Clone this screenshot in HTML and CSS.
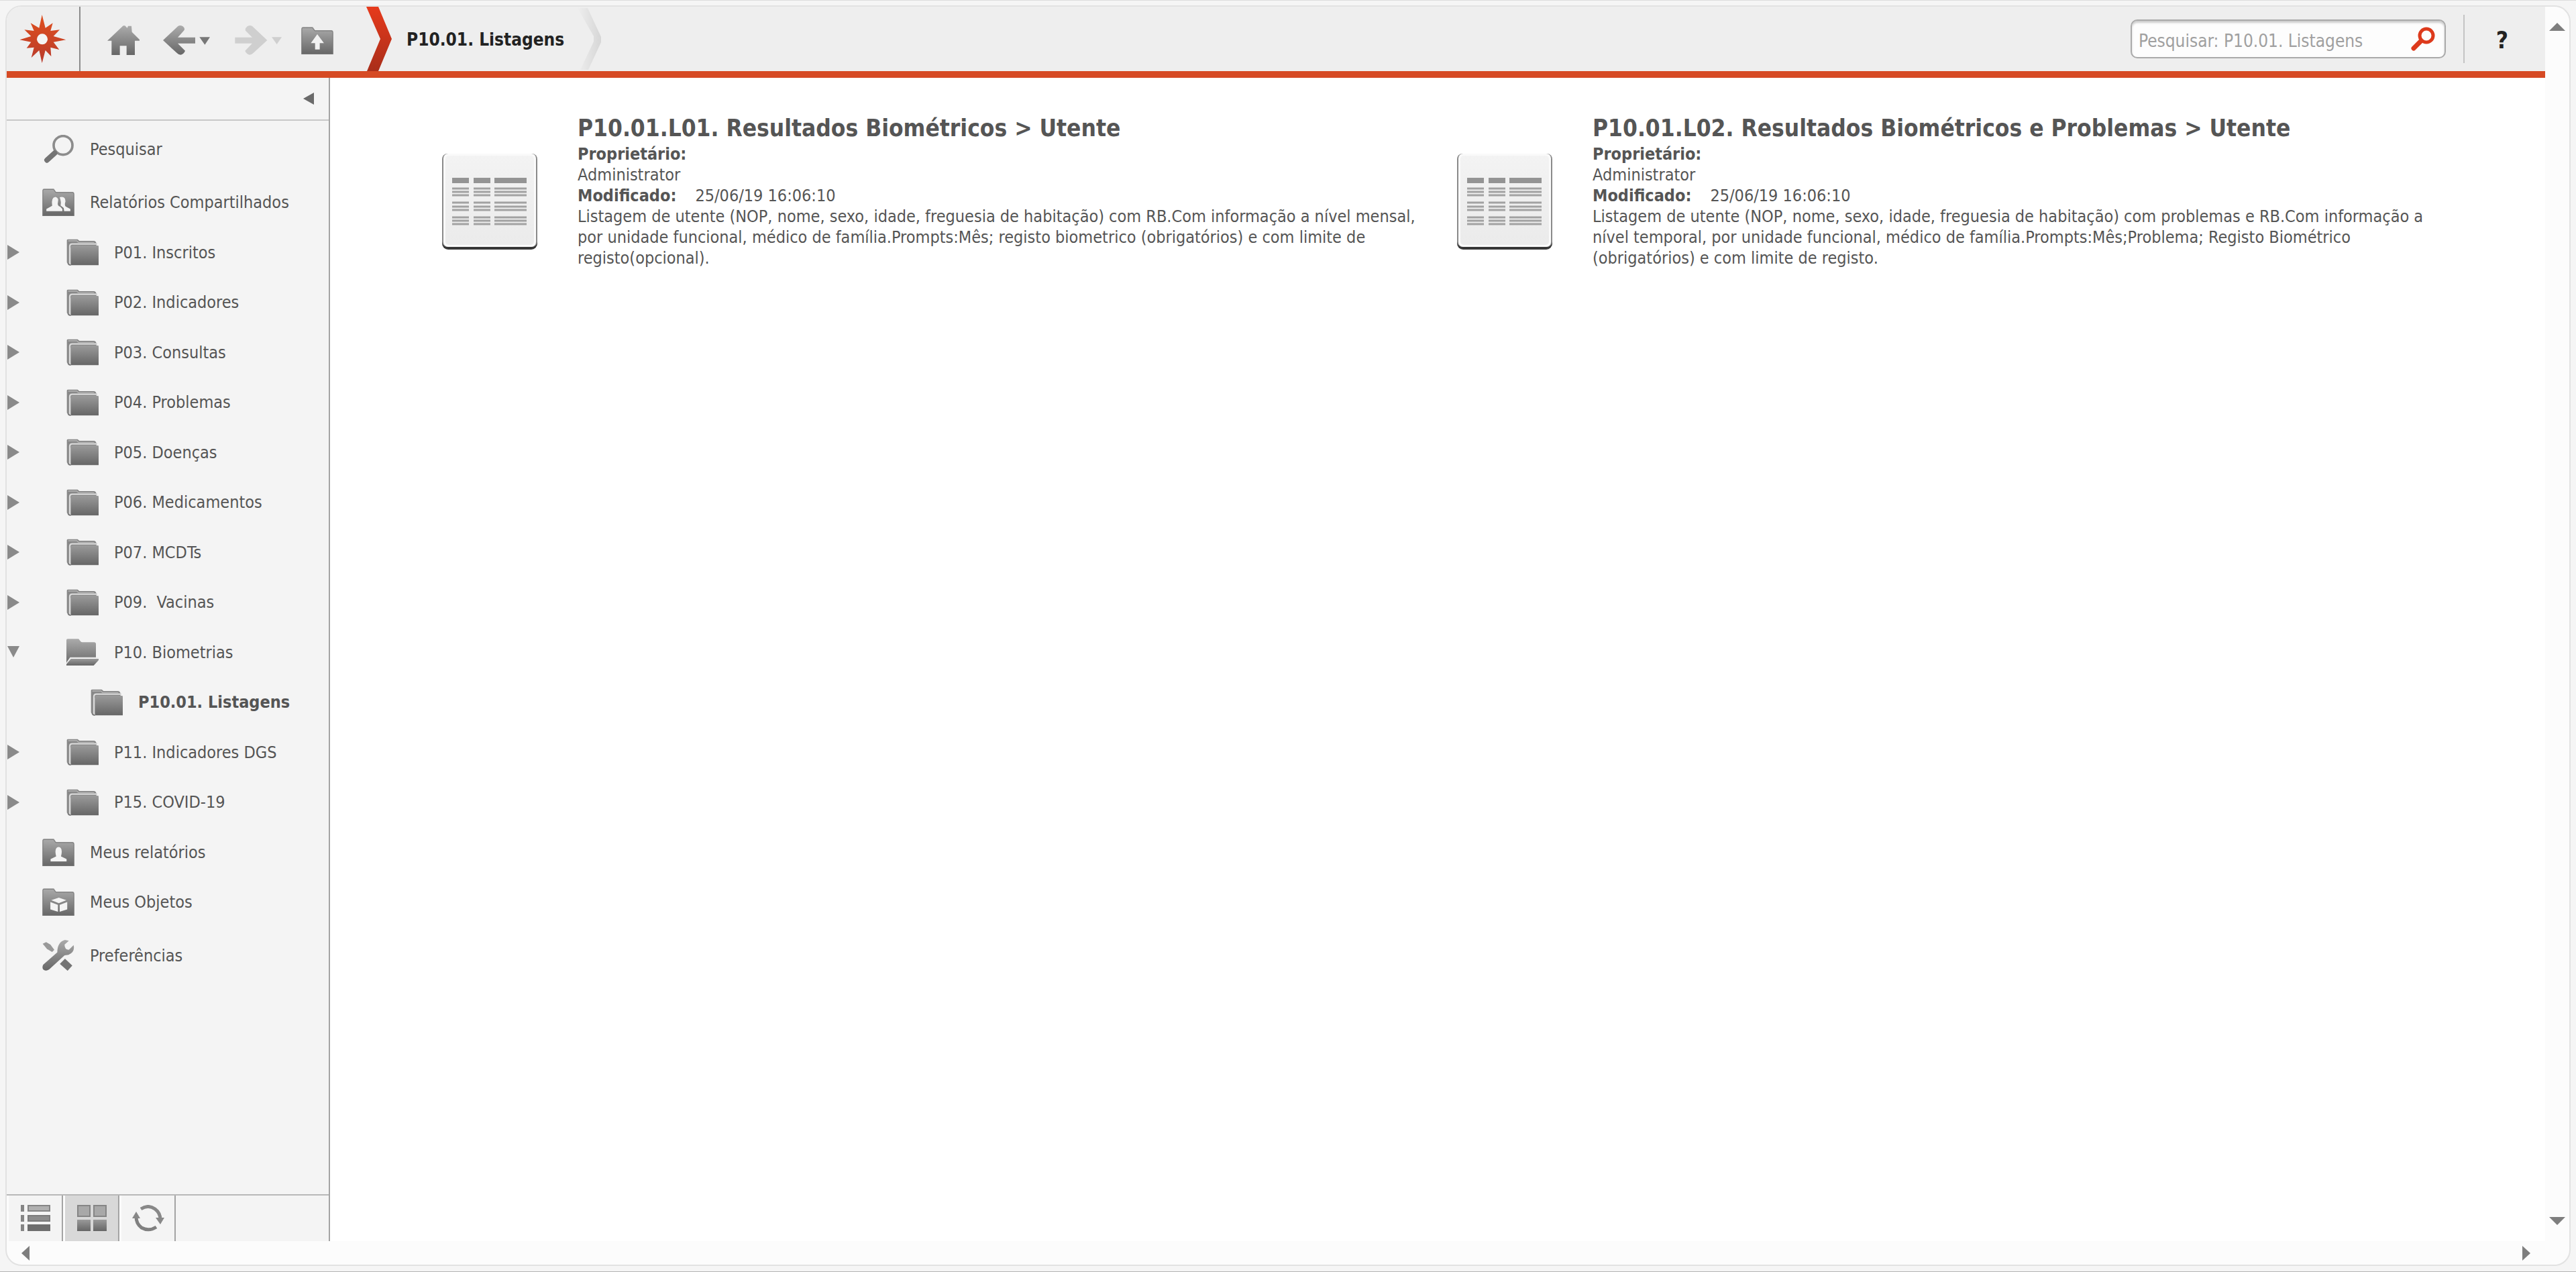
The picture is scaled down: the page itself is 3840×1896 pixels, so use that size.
FILE: index.html
```html
<!DOCTYPE html>
<html lang="pt">
<head>
<meta charset="utf-8">
<title>P10.01. Listagens</title>
<link rel="stylesheet" href="styles.css">
</head>
<body>
<svg class="sprite" aria-hidden="true">
  <defs>
    <linearGradient id="gray" x1="0" y1="0" x2="0" y2="1"><stop offset="0" stop-color="#ababab"/><stop offset="1" stop-color="#666"/></linearGradient>
    <linearGradient id="grayDark" x1="0" y1="0" x2="0" y2="1"><stop offset="0" stop-color="#9a9a9a"/><stop offset="1" stop-color="#666"/></linearGradient>
    <linearGradient id="flame" x1="0" y1="0" x2="0" y2="1"><stop offset="0" stop-color="#e0501e"/><stop offset="1" stop-color="#b83a2c"/></linearGradient>
    <linearGradient id="redBand" x1="0" y1="0" x2="0" y2="1"><stop offset="0" stop-color="#e63a1c"/><stop offset="1" stop-color="#a92e1a"/></linearGradient>
    <linearGradient id="sheet" x1="0" y1="0" x2="0" y2="1"><stop offset="0" stop-color="#f3f3f3"/><stop offset="1" stop-color="#ebebeb"/></linearGradient>
  </defs>
  <symbol id="folder" viewBox="0 0 144 120">
    <path d="M2 6Q2 2 8 2H50L58 9H122Q132 10 134 20V40H20V112H10Q2 112 2 102Z" fill="#888"/>
    <path d="M8 9H46L54 16H124" fill="none" stroke="#b4b4b4" stroke-width="4"/>
    <path d="M15 112V34Q15 23 26 23H138" fill="none" stroke="#d8d8d8" stroke-width="7"/>
    <path d="M20 118V36Q20 30 28 30H140Q144 30 144 34V118Z" fill="url(#grayDark)"/>
    <path d="M8 110Q10 117 20 117" fill="none" stroke="#777" stroke-width="6"/>
  </symbol>
  <symbol id="folder-open" viewBox="0 0 144 120">
    <path d="M0 120V6Q0 1 6 1H52Q56 1 58 5L64 13Q66 16 72 16H124Q132 16 132 24V84H18L0 108Z" fill="url(#gray)"/>
    <path d="M4 106L18 86H142" fill="none" stroke="#ececec" stroke-width="5"/>
    <path d="M0 120V114L20 90H144V96L122 120Z" fill="url(#grayDark)"/>
  </symbol>
  <symbol id="folder-flat" viewBox="0 0 144 124">
    <path d="M0 124V8Q0 1 7 1H52L62 15H136Q144 15 144 24V124Z" fill="url(#gray)"/>
    <path d="M2 122V9Q2 4 8 4H50L60 18H135Q142 18 142 26V122Z" fill="none" stroke="#777" stroke-width="3"/>
  </symbol>
  <symbol id="report" viewBox="0 0 144 144">
    <rect x="1" y="3" width="142" height="140" rx="9" fill="#363636"/>
    <rect x="1" y="0" width="142" height="139" rx="8" fill="#8a8a8a"/>
    <rect x="3" y="0" width="138" height="139" rx="7" fill="#fafafa"/>
    <rect x="6" y="3" width="132" height="133" rx="5" fill="url(#sheet)"/>
    <path d="M16 40H41M48 40H73M79 40H127" stroke="#949494" stroke-width="8"/>
    <path d="M16 52H41M48 52H73M79 52H127M16 57H41M48 57H73M79 57H127M16 62H41M48 62H73M79 62H127M16 73H41M48 73H73M79 73H127M16 79H41M48 79H73M79 79H127M16 84H41M48 84H73M79 84H127M16 95H41M48 95H73M79 95H127M16 100H41M48 100H73M79 100H127M16 105H41M48 105H73M79 105H127" stroke="#a2a2a2" stroke-width="3"/>
  </symbol>
</svg>

<div class="window">
  <div class="viewport">
    <header class="topbar">
      <a class="logo" href="#" aria-label="Início">
        <svg width="70" height="72" viewBox="91 66 208 216"><path d="M191 66L206 125L239 103L229 138L270 133L242 162L298 178L242 188L268 222L229 212L232 252L206 225L191 282L178 225L143 258L155 212L122 215L142 188L91 178L142 162L112 133L155 138L140 103L178 125Z" fill="url(#flame)"/><circle cx="192" cy="175" r="24" fill="#f4f4f4"/></svg>
      </a>
      <nav class="tools">
        <button class="tool home" aria-label="Página inicial"><svg width="48" height="44" viewBox="478 113 144 132"><path d="M478 181L549 114H557L567 124L571 115H586L588 142L622 176V181H601V245H564V204H534V245H497V181Z" fill="url(#gray)"/></svg></button>
        <button class="tool" aria-label="Voltar"><svg width="70" height="44" viewBox="729 114 210 132"><path d="M729 180L796 117Q806 111 818 118Q830 128 822 137L795 167H873V194H795L828 227Q822 242 808 245Q798 245 792 238Z" fill="url(#gray)"/><path d="M892 166H939L916 200Z" fill="#777"/></svg></button>
        <button class="tool" aria-label="Avançar" disabled><svg width="70" height="44" viewBox="1052 114 210 132"><path d="M1197 180L1130 117Q1120 111 1108 118Q1096 128 1100 137L1130 167H1053V194H1130L1098 227Q1104 242 1118 245Q1128 245 1134 238Z" fill="#cfcfcf"/><path d="M1217 166H1262L1240 198Z" fill="#cfcfcf"/></svg></button>
        <button class="tool" aria-label="Pasta superior"><svg width="48" height="41" viewBox="0 0 144 124"><use href="#folder-flat" width="144" height="124"/><path d="M72 33L102 73H83V102H62V73H43Z" fill="#f2f2f2"/></svg></button>
      </nav>
      <div class="crumbs">
        <svg width="38" height="96" viewBox="0 0 38 96"><path d="M0 0H18L38 48L18 96H1L21 48Z" fill="url(#redBand)"/></svg>
        <span class="crumb">P10.01. Listagens</span>
        <svg width="38" height="92" viewBox="0 0 38 92"><defs><linearGradient id="pale"><stop offset="0" stop-color="#eee"/><stop offset="1" stop-color="#d6d6d6"/></linearGradient></defs><path d="M2 0H17L37 43V51L18 92H6L26 50V42Z" fill="url(#pale)"/></svg>
      </div>
      <form class="search">
        <input type="text" aria-label="Pesquisar" placeholder="Pesquisar: P10.01. Listagens">
        <button type="button" aria-label="Executar pesquisa"><svg width="36" height="36" viewBox="0 0 36 36"><circle cx="23" cy="13" r="10" fill="none" stroke="#dd3a1c" stroke-width="5"/><path d="M14 22L4 32" stroke="#dd3a1c" stroke-width="7" stroke-linecap="round"/></svg></button>
      </form>
      <button class="help" aria-label="Ajuda">?</button>
    </header>

    <div class="main">
      <aside class="sidebar">
        <div class="side-head"><button class="plain" aria-label="Recolher painel"><svg width="16" height="18" viewBox="0 0 16 18"><path d="M16 0V18L0 9Z" fill="#6a6a6a"/></svg></button></div>
        <ul class="tree">
          <li class="tall"><a href="#"><svg class="icon" width="48" height="42" viewBox="187 65 144 126"><circle cx="280" cy="112" r="42" fill="none" stroke="#8c8c8c" stroke-width="11"/><path d="M242 147L208 178" stroke="#747474" stroke-width="24" stroke-linecap="round"/></svg>Pesquisar</a></li>
          <li><a href="#"><svg class="icon" width="48" height="41" viewBox="0 0 144 124"><use href="#folder-flat" width="144" height="124"/><path d="M18 102V92L44 78Q38 42 58 38Q76 42 70 62Q66 78 80 82L90 92V102ZM78 39Q104 32 104 58Q98 76 106 82L126 92V102H98L96 88L82 76Q86 60 78 39Z" fill="#f4f4f4"/></svg>Relatórios Compartilhados</a></li>
          <li class="node"><button class="plain" aria-label="Expandir"><svg width="18" height="22"><path d="M0 0L18 11L0 22Z" fill="#8a8a8a"/></svg></button><a href="#"><svg class="icon" width="48" height="40"><use href="#folder"/></svg>P01. Inscritos</a></li>
          <li class="node"><button class="plain" aria-label="Expandir"><svg width="18" height="22"><path d="M0 0L18 11L0 22Z" fill="#8a8a8a"/></svg></button><a href="#"><svg class="icon" width="48" height="40"><use href="#folder"/></svg>P02. Indicadores</a></li>
          <li class="node"><button class="plain" aria-label="Expandir"><svg width="18" height="22"><path d="M0 0L18 11L0 22Z" fill="#8a8a8a"/></svg></button><a href="#"><svg class="icon" width="48" height="40"><use href="#folder"/></svg>P03. Consultas</a></li>
          <li class="node"><button class="plain" aria-label="Expandir"><svg width="18" height="22"><path d="M0 0L18 11L0 22Z" fill="#8a8a8a"/></svg></button><a href="#"><svg class="icon" width="48" height="40"><use href="#folder"/></svg>P04. Problemas</a></li>
          <li class="node"><button class="plain" aria-label="Expandir"><svg width="18" height="22"><path d="M0 0L18 11L0 22Z" fill="#8a8a8a"/></svg></button><a href="#"><svg class="icon" width="48" height="40"><use href="#folder"/></svg>P05. Doenças</a></li>
          <li class="node"><button class="plain" aria-label="Expandir"><svg width="18" height="22"><path d="M0 0L18 11L0 22Z" fill="#8a8a8a"/></svg></button><a href="#"><svg class="icon" width="48" height="40"><use href="#folder"/></svg>P06. Medicamentos</a></li>
          <li class="node"><button class="plain" aria-label="Expandir"><svg width="18" height="22"><path d="M0 0L18 11L0 22Z" fill="#8a8a8a"/></svg></button><a href="#"><svg class="icon" width="48" height="40"><use href="#folder"/></svg>P07. MCDTs</a></li>
          <li class="node"><button class="plain" aria-label="Expandir"><svg width="18" height="22"><path d="M0 0L18 11L0 22Z" fill="#8a8a8a"/></svg></button><a href="#"><svg class="icon" width="48" height="40"><use href="#folder"/></svg>P09.&nbsp; Vacinas</a></li>
          <li class="node"><button class="plain" aria-label="Recolher"><svg width="18" height="18"><path d="M0 0H18L9 17Z" fill="#8a8a8a"/></svg></button><a href="#"><svg class="icon" width="48" height="40"><use href="#folder-open"/></svg>P10. Biometrias</a></li>
          <li class="leaf"><a href="#" aria-current="page"><svg class="icon" width="48" height="40"><use href="#folder"/></svg>P10.01. Listagens</a></li>
          <li class="node"><button class="plain" aria-label="Expandir"><svg width="18" height="22"><path d="M0 0L18 11L0 22Z" fill="#8a8a8a"/></svg></button><a href="#"><svg class="icon" width="48" height="40"><use href="#folder"/></svg>P11. Indicadores DGS</a></li>
          <li class="node"><button class="plain" aria-label="Expandir"><svg width="18" height="22"><path d="M0 0L18 11L0 22Z" fill="#8a8a8a"/></svg></button><a href="#"><svg class="icon" width="48" height="40"><use href="#folder"/></svg>P15. COVID-19</a></li>
          <li><a href="#"><svg class="icon" width="48" height="41" viewBox="0 0 144 124"><use href="#folder-flat" width="144" height="124"/><path d="M37 103V92L62 80Q52 40 73 38Q94 40 84 80L109 92V103Z" fill="#f4f4f4"/></svg>Meus relatórios</a></li>
          <li><a href="#"><svg class="icon" width="48" height="41" viewBox="0 0 144 124"><use href="#folder-flat" width="144" height="124"/><path d="M40 54L74 42L108 54L74 67ZM36 62L70 75V106L36 95ZM78 75L112 62V95L78 106Z" fill="#f4f4f4"/></svg>Meus Objetos</a></li>
          <li class="tall"><a href="#"><svg class="icon" width="48" height="46" viewBox="0 0 150 144"><path d="M2 18L18 10L38 22L56 46L46 56L22 42Z" fill="#999"/><path d="M106 88L140 120L118 144L82 112Z" fill="#747474"/><path d="M4 116L70 58Q70 10 106 0L124 4L104 22Q104 46 124 46L146 24Q154 56 122 70L104 72L32 138Q16 148 4 138Q-2 128 4 116Z" fill="url(#gray)"/></svg>Preferências</a></li>
        </ul>
        <div class="views">
          <button aria-label="Lista"><svg width="44" height="40" viewBox="0 0 44 40"><path d="M0 0H5V10H0ZM0 15H5V25H0ZM0 29H5V39H0Z" fill="#858585"/><path d="M11 1H43V9H11Z" fill="#b0b0b0" stroke="#858585" stroke-width="2"/><path d="M11 16H43V24H11Z" fill="#8c8c8c" stroke="#7c7c7c" stroke-width="2"/><path d="M10 29H44V39H10Z" fill="#6e6e6e"/></svg></button>
          <button class="on" aria-label="Ícones"><svg width="44" height="40" viewBox="0 0 44 40"><path d="M1 1H19V17H1ZM25 1H43V17H25Z" fill="#a8a8a8" stroke="#858585" stroke-width="2"/><path d="M0 22H20V39H0ZM24 22H44V39H24Z" fill="url(#grayDark)"/></svg></button>
          <button aria-label="Atualizar"><svg width="48" height="40" viewBox="0 0 48 40"><path d="M13 6Q24 -1 34 6Q42 12 42 22" fill="none" stroke="#888" stroke-width="5"/><path d="M35 19H48L42 29Z" fill="#888"/><path d="M36 33Q25 40 14 34Q6 28 6 18" fill="none" stroke="#808080" stroke-width="5"/><path d="M0 20H12L6 10Z" fill="#888"/></svg></button>
        </div>
      </aside>

      <main class="cards">
        <article class="card">
          <svg width="144" height="144"><use href="#report"/></svg>
          <div class="info">
            <h2><a href="#">P10.01.L01. Resultados Biométricos &gt; Utente</a></h2>
            <dl><dt>Proprietário:</dt><dd>Administrator</dd></dl>
            <dl class="inline"><dt>Modificado:</dt><dd>25/06/19 16:06:10</dd></dl>
            <p>Listagem de utente (NOP, nome, sexo, idade, freguesia de habitação) com RB.Com informação a nível mensal, por unidade funcional, médico de família.Prompts:Mês; registo biometrico (obrigatórios) e com limite de registo(opcional).</p>
          </div>
        </article>
        <article class="card">
          <svg width="144" height="144"><use href="#report"/></svg>
          <div class="info">
            <h2><a href="#">P10.01.L02. Resultados Biométricos e Problemas &gt; Utente</a></h2>
            <dl><dt>Proprietário:</dt><dd>Administrator</dd></dl>
            <dl class="inline"><dt>Modificado:</dt><dd>25/06/19 16:06:10</dd></dl>
            <p>Listagem de utente (NOP, nome, sexo, idade, freguesia de habitação) com problemas e RB.Com informação a nível temporal, por unidade funcional, médico de família.Prompts:Mês;Problema; Registo Biométrico (obrigatórios) e com limite de registo.</p>
          </div>
        </article>
      </main>
    </div>
  </div>
  <div class="scroll vertical">
    <button class="plain" aria-label="Rolar para cima"><svg width="24" height="12"><path d="M0 12L12 0L24 12Z" fill="#7e7e7e"/></svg></button>
    <button class="plain" aria-label="Rolar para baixo"><svg width="24" height="12"><path d="M0 0H24L12 12Z" fill="#7e7e7e"/></svg></button>
  </div>
  <div class="scroll horizontal">
    <button class="plain" aria-label="Rolar para a esquerda"><svg width="12" height="22"><path d="M12 0V22L0 11Z" fill="#7e7e7e"/></svg></button>
    <button class="plain" aria-label="Rolar para a direita"><svg width="12" height="22"><path d="M0 0V22L12 11Z" fill="#7e7e7e"/></svg></button>
  </div>
</div>
</body>
</html>
```
FILE: styles.css
```css
* {
  box-sizing: border-box;
}

body {
  margin: 0;
  min-height: 100vh;
  display: flex;
  padding: 7px 8px 8px;
  background: #f5f5f5;
  border-top: 1px solid #dcdcdc;
  border-bottom: 1px solid #b4b4b4;
  color: #555;
  font-family: Tahoma, "DejaVu Sans Condensed", "DejaVu Sans", sans-serif;
  font-size: 25px;
  line-height: 31px;
}

.sprite {
  position: absolute;
  width: 0;
  height: 0;
}

svg {
  display: block;
  flex: none;
}

a {
  color: inherit;
  text-decoration: none;
}

button {
  border: 0;
  padding: 0;
  background: none;
  color: inherit;
  font: inherit;
}

.window {
  flex: 1;
  min-width: 0;
  display: grid;
  grid-template-columns: minmax(0, 1fr) 36px;
  grid-template-rows: 1fr 35px;
  overflow: hidden;
  background: #fcfcfc;
  border: 2px solid #e2e2e2;
  border-radius: 24px;
}

.viewport {
  display: flex;
  flex-direction: column;
}

/* Top bar */

.topbar {
  display: flex;
  align-items: center;
  height: 106px;
  flex: none;
  background: #eee;
  border-bottom: 10px solid #d64a24;
  font-size: 26px;
}

.logo {
  display: flex;
  align-items: center;
  justify-content: center;
  align-self: stretch;
  width: 110px;
  border-right: 2px solid #8c8c8c;
}

.tools {
  display: flex;
  align-items: center;
  gap: 35px;
  padding: 4px 0 0 40px;
}

.tool:nth-child(3) {
  margin-left: 2px;
}

.tool:nth-child(4) {
  margin-left: -6px;
}

.crumbs {
  display: flex;
  align-items: center;
  margin-left: 49px;
}

.crumb {
  padding: 2px 18px 0 22px;
  color: #222;
  font-weight: bold;
}

.search {
  display: flex;
  align-items: center;
  width: 470px;
  height: 58px;
  margin-left: auto;
  padding: 0 14px 0 10px;
  background: #fdfdfd;
  border: 2px solid #aaa;
  border-radius: 10px;
  box-shadow: inset 0 3px 3px #ccc;
}

.search input {
  flex: 1;
  min-width: 0;
  padding: 6px 0 0;
  border: 0;
  outline: 0;
  background: none;
  color: inherit;
  font: inherit;
}

.search input::placeholder {
  color: #a0a0a0;
  opacity: 1;
}

.help {
  width: 122px;
  height: 72px;
  margin-left: 26px;
  padding-top: 4px;
  border-left: 2px solid #c4c4c4;
  color: #222;
  font-size: 35px;
  font-weight: bold;
  text-indent: -8px;
}

/* Sidebar */

.main {
  flex: 1;
  display: flex;
}

.sidebar {
  flex: none;
  display: flex;
  flex-direction: column;
  width: 482px;
  background: #f4f4f4;
  border-right: 2px solid #a4a4a4;
}

.side-head {
  display: flex;
  align-items: center;
  justify-content: flex-end;
  height: 64px;
  padding-right: 22px;
  border-bottom: 2px solid #c8c8c8;
}

.tree {
  flex: 1;
  margin: 0;
  padding: 0;
  list-style: none;
}

.tree li {
  display: flex;
  align-items: center;
  height: 74px;
  padding-left: 53px;
}

.tree li:nth-child(even) {
  height: 75px;
}

.tree .tall,
.tree .tall:nth-child(odd) {
  height: 84px;
}

.tree .node {
  padding-left: 1px;
}

.tree .node a {
  margin-left: 70px;
}

.tree .leaf {
  padding-left: 125px;
}

.tree a {
  display: flex;
  align-items: center;
  gap: 23px;
}

.tree [aria-current] {
  font-weight: bold;
}

.views {
  display: flex;
  height: 70px;
  border-top: 2px solid #b8b8b8;
}

.views button {
  display: flex;
  align-items: center;
  justify-content: center;
  width: 84px;
  border-left: 3px solid #fcfcfc;
  border-right: 2px solid #a4a4a4;
}

.views .on {
  background: #d8d8d8;
}

/* Report cards */

.cards {
  flex: 1;
  display: grid;
  grid-template-columns: 1fr 1fr;
  align-items: start;
  padding: 53px 110px 0 166px;
  background: #fff;
}

.card {
  display: flex;
  gap: 59px;
  padding-right: 40px;
}

.card > svg {
  margin-top: 60px;
}

.info h2 {
  margin: 0;
  font-size: 35px;
  line-height: 45px;
}

.info dl,
.info dd,
.info p {
  margin: 0;
}

.info dt {
  font-weight: bold;
}

.info .inline {
  display: flex;
  gap: 28px;
}

/* Scroll bars */

.scroll {
  display: flex;
  align-items: center;
  justify-content: space-between;
}

.vertical {
  flex-direction: column;
  padding: 24px 0;
}

.horizontal {
  padding: 0 22px;
}
```
